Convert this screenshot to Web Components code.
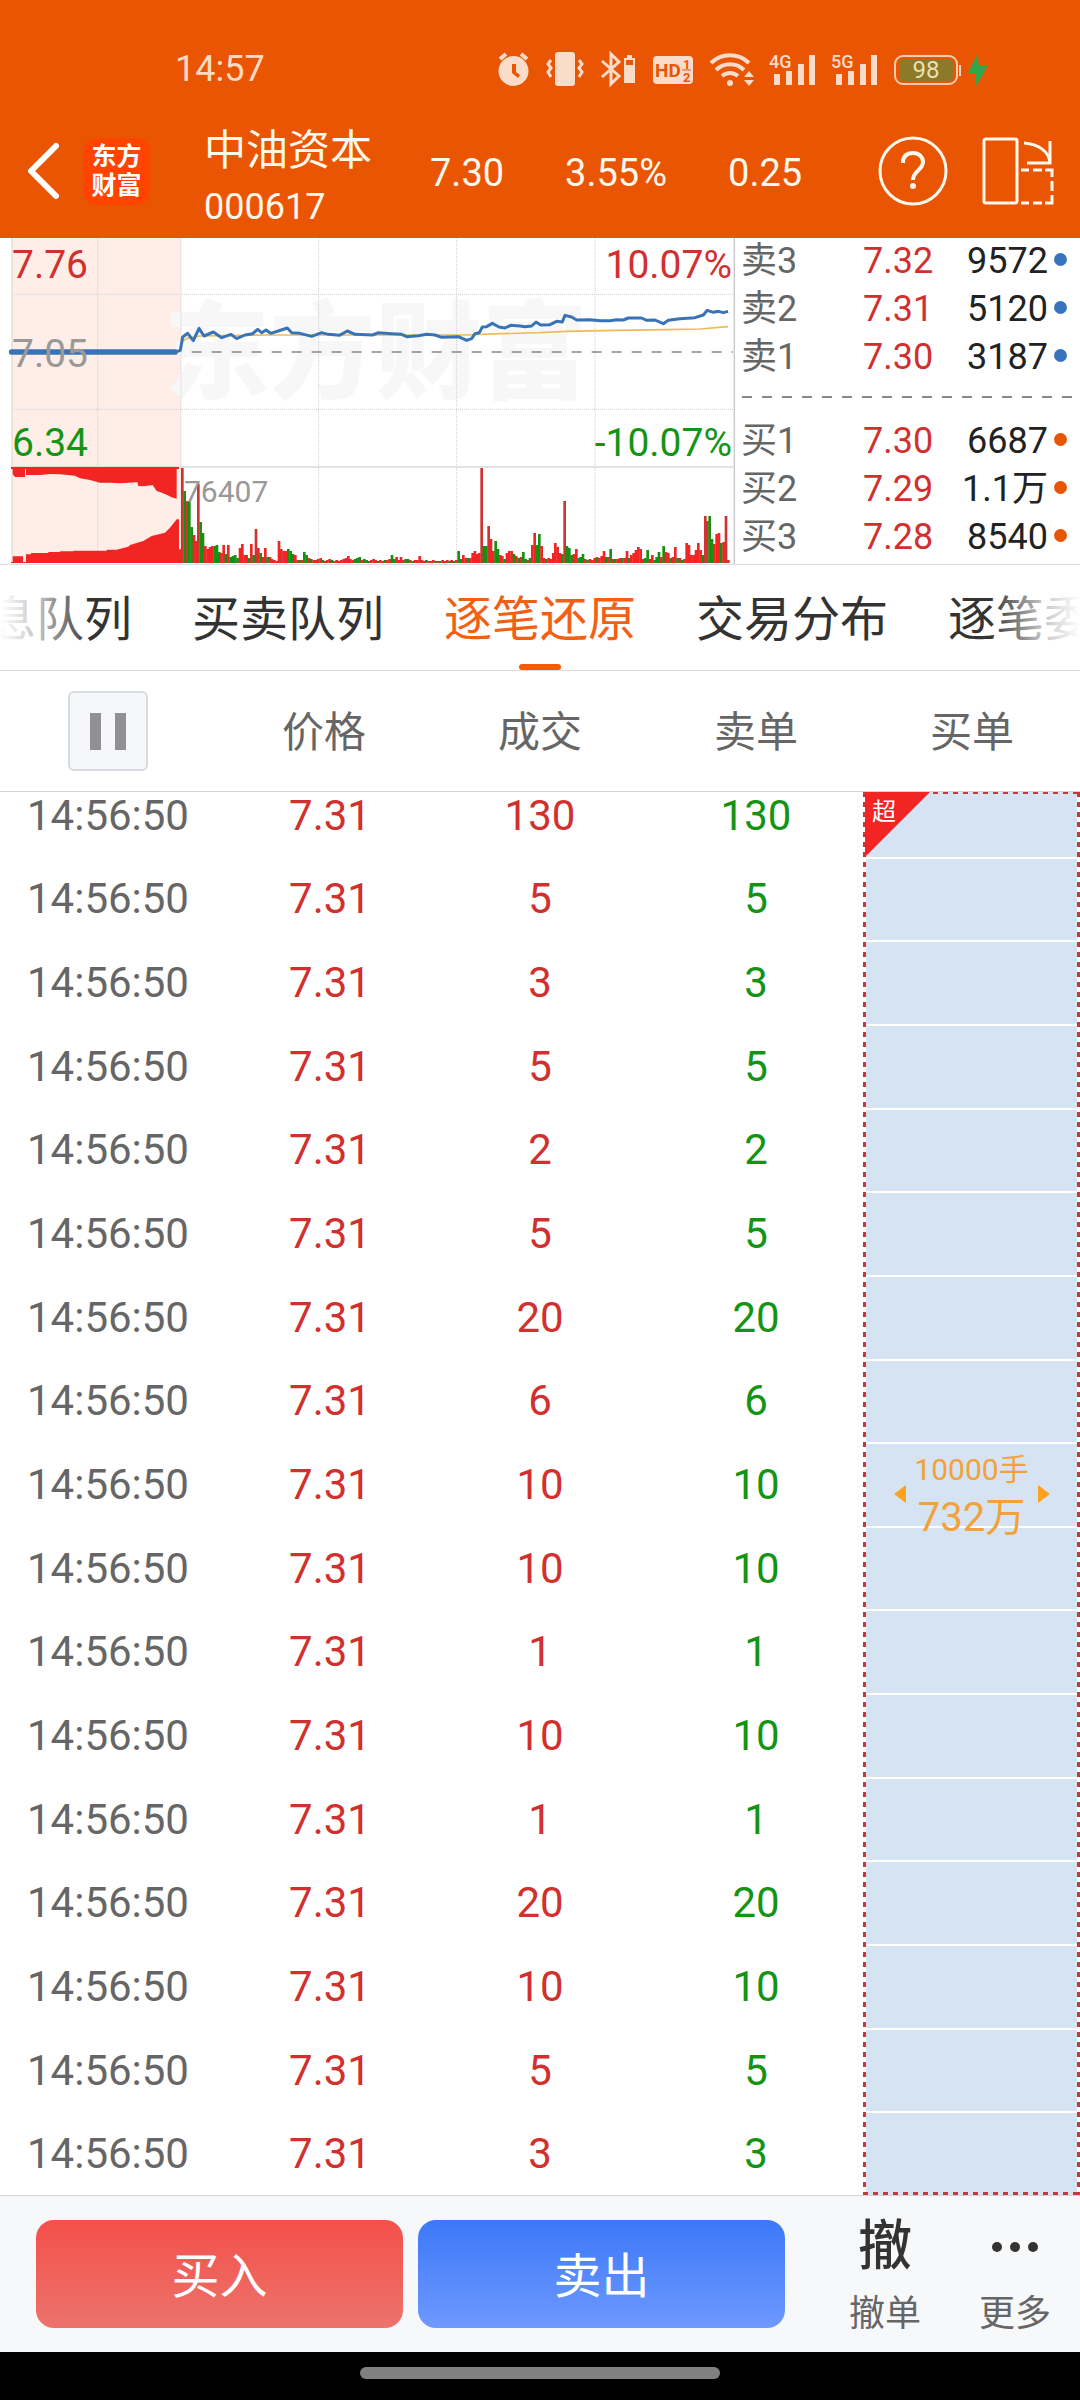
<!DOCTYPE html>
<html lang="zh-CN">
<head>
<meta charset="utf-8">
<meta name="viewport" content="width=device-width, initial-scale=1">
<title>中油资本 000617</title>
<style>
  html, body { margin: 0; }
  body {
    --brand: #e95502;
    --up: #d2302f;
    --down: #149414;
    --line: #dcdcdc;
    display: flex;
    flex-direction: column;
    min-height: 100vh;
    overflow-x: hidden;
    background: #fff;
    color: #222;
    font-family: Roboto, "Noto Sans CJK SC", sans-serif;
    font-size: 36px;
  }
  .market {
    display: grid;
    grid-template-columns: 735fr 345fr;
    border-bottom: 1px solid var(--line);
  }
  tick-table { flex: 1; }
</style>
</head>
<body>
  <status-bar time="14:57" battery="98"></status-bar>

  <stock-header price="7.30" percent="3.55%" change="0.25">
    <span slot="name">中油资本</span>
    <span slot="code">000617</span>
  </stock-header>

  <section class="market">
    <intraday-chart high="7.76" mid="7.05" low="6.34" percent="10.07%" volume="76407"></intraday-chart>
    <order-book>
      <script type="application/json">
        {
          "sell": [["卖3", "7.32", "9572"], ["卖2", "7.31", "5120"], ["卖1", "7.30", "3187"]],
          "buy": [["买1", "7.30", "6687"], ["买2", "7.29", "1.1万"], ["买3", "7.28", "8540"]]
        }
      </script>
    </order-book>
  </section>

  <queue-tabs>
    <queue-tab>息队列</queue-tab>
    <queue-tab>买卖队列</queue-tab>
    <queue-tab active>逐笔还原</queue-tab>
    <queue-tab>交易分布</queue-tab>
    <queue-tab>逐笔委</queue-tab>
  </queue-tabs>

  <tick-table time="14:56:50" price="7.31" lots="130,5,3,5,2,5,20,6,10,10,1,10,1,20,10,5,3">
    <span slot="hands">10000手</span>
    <span slot="amount">732万</span>
  </tick-table>

  <trade-bar>
    <trade-action label="撤单"><b>撤</b></trade-action>
    <trade-action label="更多">
      <svg width="46" height="10" viewBox="0 0 46 10" fill="#333"><circle cx="5" cy="5" r="5"/><circle cx="23" cy="5" r="5"/><circle cx="41" cy="5" r="5"/></svg>
    </trade-action>
  </trade-bar>

  <home-pill></home-pill>

<script>
class StatusBar extends HTMLElement {
  constructor() {
    super();
    this.attachShadow({ mode: "open" });
  }

  signal(label) {
    return `
      <svg width="45" height="34" viewBox="0 0 45 34">
        <text x="-1" y="16" font-size="18" font-weight="500">${label}</text>
        <path d="M4 22h6v11H4zM16 19h6v14h-6zM28 12h6v21h-6zM39 3h6v30h-6z"/>
      </svg>`;
  }

  connectedCallback() {
    this.shadowRoot.innerHTML = `
      <style>
        :host {
          display: flex;
          align-items: center;
          justify-content: space-between;
          padding: 44px 92px 0 175px;
          height: 50px;
          background: var(--brand);
          color: #fddac4;
        }
        .icons { display: flex; gap: 17px; }
        svg { display: block; fill: #fbdccb; overflow: visible; }
      </style>
      <time>${this.getAttribute("time")}</time>
      <div class="icons">
        <svg width="31" height="34" viewBox="0 0 31 34">
          <path fill-rule="evenodd" d="M15.500 4a15 15 0 1 1 0 30a15 15 0 0 1 0-30zM14 12v9l6 5 2-3-4-3v-8z"/>
          <path d="M2 7l6-5M29 7l-6-5" fill="none" stroke="#fbdccb" stroke-width="4"/>
        </svg>
        <svg width="38" height="34" viewBox="0 0 38 34">
          <rect x="9" width="20" height="34" rx="3"/>
          <path d="M5 8l-3 4 3 4-3 4 3 5M33 8l3 4-3 4 3 4-3 5" fill="none" stroke="#fbdccb" stroke-width="3"/>
        </svg>
        <svg width="35" height="34" viewBox="0 0 35 34">
          <path d="M1 9l17 15-8 8V2l8 8L1 25" fill="none" stroke="#fbdccb" stroke-width="3"/>
          <path fill-rule="evenodd" d="M26 3h5v3h3v25H23V6h3zM25 8v5h7V8z"/>
        </svg>
        <svg width="40" height="34" viewBox="0 0 40 34">
          <rect y="4" width="40" height="28" rx="4"/>
          <g fill="#e95502" font-weight="700">
            <text x="2" y="25" font-size="19">HD</text>
            <text x="30" y="17" font-size="13">1</text>
            <text x="30" y="30" font-size="13">2</text>
          </g>
          <path d="M29 18h9" stroke="#e95502"/>
        </svg>
        <svg width="43" height="34" viewBox="0 0 43 34">
          <path d="M1 11a27 27 0 0 1 38 0M6 18a20 20 0 0 1 28 0M12 24a12 12 0 0 1 16 0" fill="none" stroke="#fbdccb" stroke-width="4"/>
          <circle cx="20" cy="31" r="3"/>
          <path d="M34 25l5-6 5 6zM34 28h10l-5 6z"/>
        </svg>
        ${this.signal("4G")}
        ${this.signal("5G")}
        <svg width="94" height="34" viewBox="0 0 94 34">
          <rect x="1" y="4" width="62" height="28" rx="8" fill="none" stroke="#fbcdb0" stroke-width="2"/>
          <rect x="5" y="7" width="54" height="22" rx="4" fill="#8d7a28"/>
          <path d="M65 13h2v11h-2z"/>
          <text x="32" y="26" font-size="24" text-anchor="middle" fill="#ecdfb4">${this.getAttribute("battery")}</text>
          <path d="M83 3L74 21h8l0 13L94 14h-9z" fill="#2ea84a"/>
        </svg>
      </div>
    `;
  }
}
customElements.define("status-bar", StatusBar);

class StockHeader extends HTMLElement {
  constructor() {
    super();
    this.attachShadow({ mode: "open" });
  }

  connectedCallback() {
    this.shadowRoot.innerHTML = `
      <style>
        :host {
          display: flex;
          align-items: center;
          height: 134px;
          padding: 10px 26px 0 27px;
          background: var(--brand);
          color: #fff8ec;
        }
        svg { display: block; fill: none; stroke: #fff8ec; }
        button { padding: 0; border: 0; background: none; color: inherit; font: inherit; }
        .logo {
          box-sizing: border-box;
          width: 67px;
          height: 67px;
          margin-left: 24px;
          padding: 4px 0;
          border-radius: 14px;
          background: #ff4400;
          color: #fff;
          font-size: 25px;
          font-weight: 700;
          line-height: 29px;
          text-align: center;
        }
        .name {
          align-self: flex-end;
          display: grid;
          margin-left: 54px;
          padding-bottom: 3px;
          line-height: 56px;
        }
        .title { font-size: 42px; }
        .quote { display: flex; gap: 61px; margin-left: 58px; padding-top: 4px; font-size: 38px; }
        .tools { display: flex; gap: 34px; margin-left: auto; }
      </style>
      <button type="button" aria-label="返回">
        <svg width="32" height="56" viewBox="0 0 32 56"><path d="M29 3L4 28l25 25" stroke-width="6" stroke="#fff" stroke-linecap="round" stroke-linejoin="round"/></svg>
      </button>
      <div class="logo">东方<br>财富</div>
      <div class="name">
        <span class="title"><slot name="name"></slot></span>
        <span><slot name="code"></slot></span>
      </div>
      <div class="quote">
        <span>${this.getAttribute("price")}</span>
        <span>${this.getAttribute("percent")}</span>
        <span>${this.getAttribute("change")}</span>
      </div>
      <div class="tools">
        <button type="button" aria-label="帮助">
          <svg width="70" height="70" viewBox="0 0 70 70" stroke-width="3">
            <circle cx="35" cy="35" r="33"/>
            <path d="M25 27c0-7 4-10 10-10s10 4 10 9c0 8-10 9-10 18" stroke-width="4"/>
            <circle cx="35" cy="50" r="3" fill="#fff8ec" stroke="none"/>
          </svg>
        </button>
        <button type="button" aria-label="横屏">
          <svg width="72" height="68" viewBox="0 0 72 68" stroke-width="3">
            <rect x="2" y="2" width="33" height="64" rx="2"/>
            <path d="M42 6c14 1 25 8 26 20M68 4v22H45"/>
            <path d="M39 33h8M51 33h9M63 33h7v7M70 44v10M39 66h8M51 66h9M63 66h7v-8"/>
          </svg>
        </button>
      </div>
    `;
  }
}
customElements.define("stock-header", StockHeader);

class IntradayChart extends HTMLElement {
  constructor() {
    super();
    this.attachShadow({ mode: "open" });
  }

  // one entry per minute: height and direction
  get volumes() {
    return (
      "95r 72g 62r 62g 36g 28r 22r 79r 41g 30g 17r 14r 16r 17r 17g 18g 11g 10r 18r 9g 18r 6g 7g 8g 5g 15r 19r 8r 8r 5g " +
      "19r 8g 34r 15r 10g 6r 15r 6g 6r 4r 3r 2r 22r 14r 12r 12r 14g 12g 9g 8r 3r 3g 3r 11g 8g 5r 4g 3r 3r 4r " +
      "5r 3g 2r 3r 4r 3g 2r 3r 2r 3r 4r 5r 7r 4r 3r 4g 5g 6g 3r 4g 3g 2g 3r 4r 3r 2g 3r 2r 3g 3r " +
      "4r 8g 4g 6r 3r 6r 3r 4g 4g 3r 2g 3r 3r 7r 3r 2r 3g 2r 2r 3r 2g 2r 2g 3r 2r 3r 2g 3r 2g " +
      "3r 12g 4g 8r 5r 5g 5r 10r 12r 9r 10r 95r 17g 17g 37r 24r 12r 22g 14g 8r 7r 4g 10r 12r 12r 9g 7r 5g 6r 11g " +
      "4g 3r 5g 18r 30r 18g 29g 17r 5r 4g 5r 4r 10r 20r 16r 10r 9g 62r 17g 15g 8g 9r 14r 5g 6g 9g 4r 3g 4r 3r 5r " +
      "6g 5r 7r 12r 6g 6r 14g 4r 4g 4r 5r 5g 5r 12r 5g 8r 10r 13r 16r 14r 4r 5g 13g 4r 8r 3g 6g 11g 6r 17g " +
      "11r 10r 5g 6r 16r 5g 5r 3g 4r 20r 18r 8r 8r 13r 20r 13r 8g 47r 42r 47g 24g 19r 29r 30r 20g 21r 47r 3r"
    ).split(" ");
  }

  connectedCallback() {
    const bars = this.volumes
      .map((v, i) => {
        const h = parseInt(v, 10) * 3;
        const fill = v.endsWith("g") ? "#159010" : h > 100 ? "#cf3433" : "#f22424";
        return `<rect x="${Math.round(543 + i * 6.91)}" y="${981 - h}" width="8" height="${h}" fill="${fill}"/>`;
      })
      .join("");

    this.shadowRoot.innerHTML = `
      <style>
        :host { display: block; position: relative; height: 326px; overflow: hidden; font-size: 39px; line-height: 44px; }
        svg { position: absolute; inset: 0; width: 100%; height: 100%; }
        .labels {
          position: relative;
          display: grid;
          grid-template-columns: auto auto;
          grid-template-rows: 89px 89px 54px auto;
          justify-content: space-between;
          padding: 5px 3px 0 12px;
        }
        .labels span:nth-child(even) { text-align: right; }
        .up { color: var(--up); }
        .down { color: var(--down); }
        .mid { color: #999; }
        .volume { grid-column: 1 / -1; margin-left: 172px; color: #999; font-size: 30px; line-height: 34px; }
        .mark {
          position: absolute;
          inset: 0 0 94px 16px;
          display: grid;
          place-items: center;
          color: #f7f7f7;
          font-size: 106px;
          font-weight: 900;
        }
      </style>
      <svg viewBox="0 6 2205 978" preserveAspectRatio="none">
        <rect x="36" y="6" width="507" height="975" fill="#feeee7"/>
      </svg>
      <div class="mark" aria-hidden="true">东方财富</div>
      <svg viewBox="0 6 2205 978" preserveAspectRatio="none" fill="none">
        <path d="M36 175H2199M36 520H2199M293 6V981M543 6V981M956 6V981M1370 6V981M1785 6V981" stroke="#cfcfcf" stroke-width="3" stroke-dasharray="3 3"/>
        <path d="M36 6V981" stroke="#ddd" stroke-width="4"/>
        <path d="M36 693H2199" stroke="#d8d8d8" stroke-width="5"/>
        <path d="M2203 6V984" stroke="#c8c8c8" stroke-width="4"/>
        <path d="M575 348H2199" stroke="#888" stroke-width="5" stroke-dasharray="30 30"/>
        <path fill="#f22424" d="M33 693H537V699H530V788L515 784 500 776 480 768 470 765 458 747 430 751 415 750 412 739 360 742 330 740 300 740 270 732 240 727 225 719 210 718 180 715 150 714 120 717 78 717V699H75V723H45L38 715V699H33zM33 981V978H38V961H69V978H78V955H93V951H145V948H180V946H220V944H320V941H350L385 932 390 927 430 915 455 900 495 890 510 875 530 850H537V940H543V981z"/>
        ${bars}
        <path d="M543 320L560 307 600 300 800 297 1400 297 1500 293 1620 290 1700 286 1850 283 2000 281 2100 279 2184 272" stroke="#eebb55" stroke-width="5"/>
        <path d="M35 348H525" stroke="#3873b8" stroke-width="17" stroke-linecap="round"/>
        <path d="M525 348L541 343 548 303 563 292 580 314 597 277 612 300 640 288 665 305 693 295 710 308 735 297 758 293 773 280 785 290 798 282 812 292 835 285 862 276 875 290 900 292 935 301 965 290 985 295 1018 298 1042 285 1065 295 1118 297 1135 290 1175 293 1205 295 1220 302 1255 299 1280 295 1305 297 1325 304 1375 302 1400 313 1415 308 1425 293 1438 290 1447 273 1460 272 1477 262 1497 273 1515 276 1532 268 1560 270 1575 272 1595 270 1608 258 1622 267 1650 266 1670 256 1687 258 1695 238 1715 243 1730 252 1770 251 1800 254 1830 254 1850 251 1870 252 1885 246 1925 246 1940 253 1965 252 1990 263 2005 253 2040 248 2085 245 2110 237 2122 223 2140 229 2155 226 2170 230 2184 226" stroke="#3873b8" stroke-width="9" stroke-linejoin="round"/>
      </svg>
      <div class="labels">
        <span class="up">${this.getAttribute("high")}</span>
        <span class="up">${this.getAttribute("percent")}</span>
        <span class="mid">${this.getAttribute("mid")}</span>
        <span></span>
        <span class="down">${this.getAttribute("low")}</span>
        <span class="down">-${this.getAttribute("percent")}</span>
        <span class="volume">${this.getAttribute("volume")}</span>
      </div>
    `;
  }
}
customElements.define("intraday-chart", IntradayChart);

class OrderBook extends HTMLElement {
  constructor() {
    super();
    this.attachShadow({ mode: "open" });
  }

  get data() {
    const script = this.querySelector('script[type="application/json"]');
    return script ? JSON.parse(script.textContent) : { sell: [], buy: [] };
  }

  rows(list) {
    return list
      .map(([level, price, qty]) => `<tr><th scope="row">${level}</th><td class="price">${price}</td><td class="qty">${qty}</td><td class="dot"></td></tr>`)
      .join("");
  }

  connectedCallback() {
    const { sell, buy } = this.data;
    this.shadowRoot.innerHTML = `
      <style>
        :host { display: flex; flex-direction: column; height: 326px; justify-content: flex-end; overflow: hidden; }
        table { flex: none; width: 100%; border-collapse: collapse; table-layout: fixed; line-height: 48px; }
        th, td { padding: 0; font-weight: 400; }
        th { width: 128px; padding-left: 6px; color: #666; text-align: left; box-sizing: border-box; }
        .price { width: 76px; color: var(--up); }
        .qty { text-align: right; }
        .dot { width: 32px; --dot: #3873c0; }
        .buy .dot { --dot: #e95502; }
        .dot::after { content: ""; display: block; width: 13px; height: 13px; margin: 0 0 4px 6px; border-radius: 50%; background: var(--dot); }
        hr {
          flex: none;
          width: 330px;
          height: 2px;
          margin: 15px 8px 19px 7px;
          border: 0;
          background: repeating-linear-gradient(to right, #888 0 10px, transparent 10px 20px);
        }
        .buy { margin-bottom: 3px; }
      </style>
      <table>${this.rows(sell)}</table>
      <hr>
      <table class="buy">${this.rows(buy)}</table>
    `;
  }
}
customElements.define("order-book", OrderBook);

class QueueTabs extends HTMLElement {
  constructor() {
    super();
    this.attachShadow({ mode: "open" });
    this.shadowRoot.innerHTML = `
      <style>
        :host {
          position: relative;
          display: flex;
          justify-content: center;
          gap: 60px;
          height: 105px;
          border-bottom: 1px solid var(--line);
          overflow: hidden;
        }
        :host::before, :host::after {
          content: "";
          position: absolute;
          z-index: 1;
          top: 0;
          bottom: 0;
          width: 90px;
          background: linear-gradient(to right, #fff, #fffb 40%, #fff0);
        }
        :host::before { left: 0; }
        :host::after { right: 0; transform: rotate(180deg); }
      </style>
      <slot></slot>
    `;
  }
}
customElements.define("queue-tabs", QueueTabs);

class QueueTab extends HTMLElement {
  constructor() {
    super();
    this.attachShadow({ mode: "open" });
    this.shadowRoot.innerHTML = `
      <style>
        :host { display: flex; flex: none; color: #333; }
        :host([active]) { color: #f26014; }
        button {
          display: flex;
          flex-direction: column;
          align-items: center;
          justify-content: space-between;
          padding: 0;
          border: 0;
          background: none;
          color: inherit;
          font: inherit;
          font-size: 48px;
          line-height: 72px;
          white-space: nowrap;
        }
        button::before { content: ""; height: 10px; }
        button::after { content: ""; width: 42px; height: 6px; border-radius: 3px; }
        :host([active]) button::after { background: #f8580a; }
      </style>
      <button type="button"><slot></slot></button>
    `;
  }
}
customElements.define("queue-tab", QueueTab);

class TickTable extends HTMLElement {
  constructor() {
    super();
    this.attachShadow({ mode: "open" });
  }

  get lots() {
    return (this.getAttribute("lots") || "").split(",");
  }

  connectedCallback() {
    const time = this.getAttribute("time");
    const price = this.getAttribute("price");

    this.shadowRoot.innerHTML = `
      <style>
        :host { position: relative; display: flex; font-size: 42px; line-height: 48px; }
        table { flex: 1; display: flex; flex-direction: column; }
        tr { display: grid; grid-template-columns: repeat(5, 1fr); align-items: center; text-align: center; }
        th, td { padding: 0; font-weight: 400; }
        thead { position: relative; z-index: 1; border-bottom: 1px solid #d4d4d4; background: #fff; color: #666; }
        thead tr { height: 120px; }
        th + th { padding-top: 4px; }
        button {
          box-sizing: border-box;
          display: flex;
          align-items: center;
          justify-content: center;
          gap: 14px;
          width: 80px;
          height: 80px;
          margin: 0 auto;
          border: 2px solid #d8dce0;
          border-radius: 6px;
          background: #f6f7fa;
        }
        button::before, button::after { content: ""; width: 11px; height: 37px; background: #909095; }
        /* the list is scrolled a little, so its first row starts under the head */
        tbody { flex: 1; display: grid; grid-auto-rows: minmax(72px, 1fr); margin-top: -19px; }
        td { padding-top: 2px; }
        .time { color: #666; }
        .price, .deal { color: var(--up); }
        .price { padding-left: 12px; }
        .sell { color: var(--down); }
        .buy { align-self: stretch; margin: 0 1px; border-top: 2px solid #fff; background: #d6e3f3; }
        .order {
          --v: repeating-linear-gradient(#c83838 0 5px, #fff 5px 10px);
          --h: repeating-linear-gradient(to right, #c83838 0 5px, #fff0 5px 10px);
          position: absolute;
          top: 121px;
          right: 0;
          bottom: 0;
          width: calc(20% + 1px);
          display: flex;
          align-items: center;
          justify-content: center;
          gap: 8px;
          background: var(--v) left / 3px 100% no-repeat, var(--v) right / 3px 100% no-repeat,
            var(--h) top / 100% 2px no-repeat, var(--h) bottom / 100% 3px no-repeat;
          color: #f2a23a;
          text-align: center;
        }
        .size { display: grid; width: 116px; justify-items: center; font-size: 40px; }
        .hands { font-size: 30px; }
        .tag {
          position: absolute;
          top: 0;
          left: 2px;
          width: 58px;
          height: 60px;
          padding: 5px 0 0 7px;
          background: #f22424;
          clip-path: polygon(0 0, 100% 0, 0 100%);
          color: #fff;
          font-size: 24px;
          line-height: 30px;
          text-align: left;
        }
        svg { flex: none; fill: #ffa01e; }
      </style>
      <table>
        <thead>
          <tr>
            <th><button type="button" aria-label="暂停"></button></th>
            <th>价格</th><th>成交</th><th>卖单</th><th>买单</th>
          </tr>
        </thead>
        <tbody>
          ${this.lots
            .map(
              (n) => `
            <tr>
              <td class="time">${time}</td>
              <td class="price">${price}</td>
              <td class="deal">${n}</td>
              <td class="sell">${n}</td>
              <td class="buy"></td>
            </tr>
          `
            )
            .join("")}
        </tbody>
      </table>
      <div class="order">
        <span class="tag">超</span>
        <svg width="12" height="18"><path d="M12 0v18L0 9z"/></svg>
        <div class="size">
          <span class="hands"><slot name="hands"></slot></span>
          <slot name="amount"></slot>
        </div>
        <svg width="12" height="18"><path d="M0 0v18l12-9z"/></svg>
      </div>
    `;
  }
}
customElements.define("tick-table", TickTable);

class TradeBar extends HTMLElement {
  constructor() {
    super();
    this.attachShadow({ mode: "open" });
    this.shadowRoot.innerHTML = `
      <style>
        :host {
          display: flex;
          padding: 24px 0 24px 36px;
          border-top: 1px solid #d2d5d8;
          background: #f7f8fa;
        }
        .trade { flex: 1; display: grid; grid-template-columns: 1fr 1fr; gap: 15px; margin-right: 35px; }
        button { height: 108px; padding: 0 0 4px; border: 0; border-radius: 18px; color: #fff; font: inherit; font-size: 48px; }
        .buy { background: linear-gradient(#f4504a, #ec736c); }
        .sell { background: linear-gradient(#3c78f8, #6e99ff); }
      </style>
      <div class="trade">
        <button type="button" class="buy">买入</button>
        <button type="button" class="sell">卖出</button>
      </div>
      <slot></slot>
    `;
  }
}
customElements.define("trade-bar", TradeBar);

class TradeAction extends HTMLElement {
  constructor() {
    super();
    this.attachShadow({ mode: "open" });
  }

  connectedCallback() {
    this.shadowRoot.innerHTML = `
      <style>
        :host { display: block; width: 130px; height: 108px; }
        button {
          display: grid;
          grid-template-rows: 54px 80px;
          width: 100%;
          padding: 0;
          border: 0;
          background: none;
          color: #666;
          font: inherit;
          line-height: 80px;
        }
        .icon { display: grid; place-items: center; color: #333; font-size: 54px; line-height: 54px; }
        ::slotted(b) { font-weight: 500; }
      </style>
      <button type="button">
        <span class="icon"><slot></slot></span>
        <span>${this.getAttribute("label")}</span>
      </button>
    `;
  }
}
customElements.define("trade-action", TradeAction);

class HomePill extends HTMLElement {
  constructor() {
    super();
    this.attachShadow({ mode: "open" });
    this.shadowRoot.innerHTML = `
      <style>
        :host { display: block; padding: 15px 0 21px; background: #000; }
        div { width: calc(100% / 3); height: 12px; margin: 0 auto; border-radius: 6px; background: #808080; }
      </style>
      <div></div>
    `;
  }
}
customElements.define("home-pill", HomePill);
</script>
</body>
</html>
